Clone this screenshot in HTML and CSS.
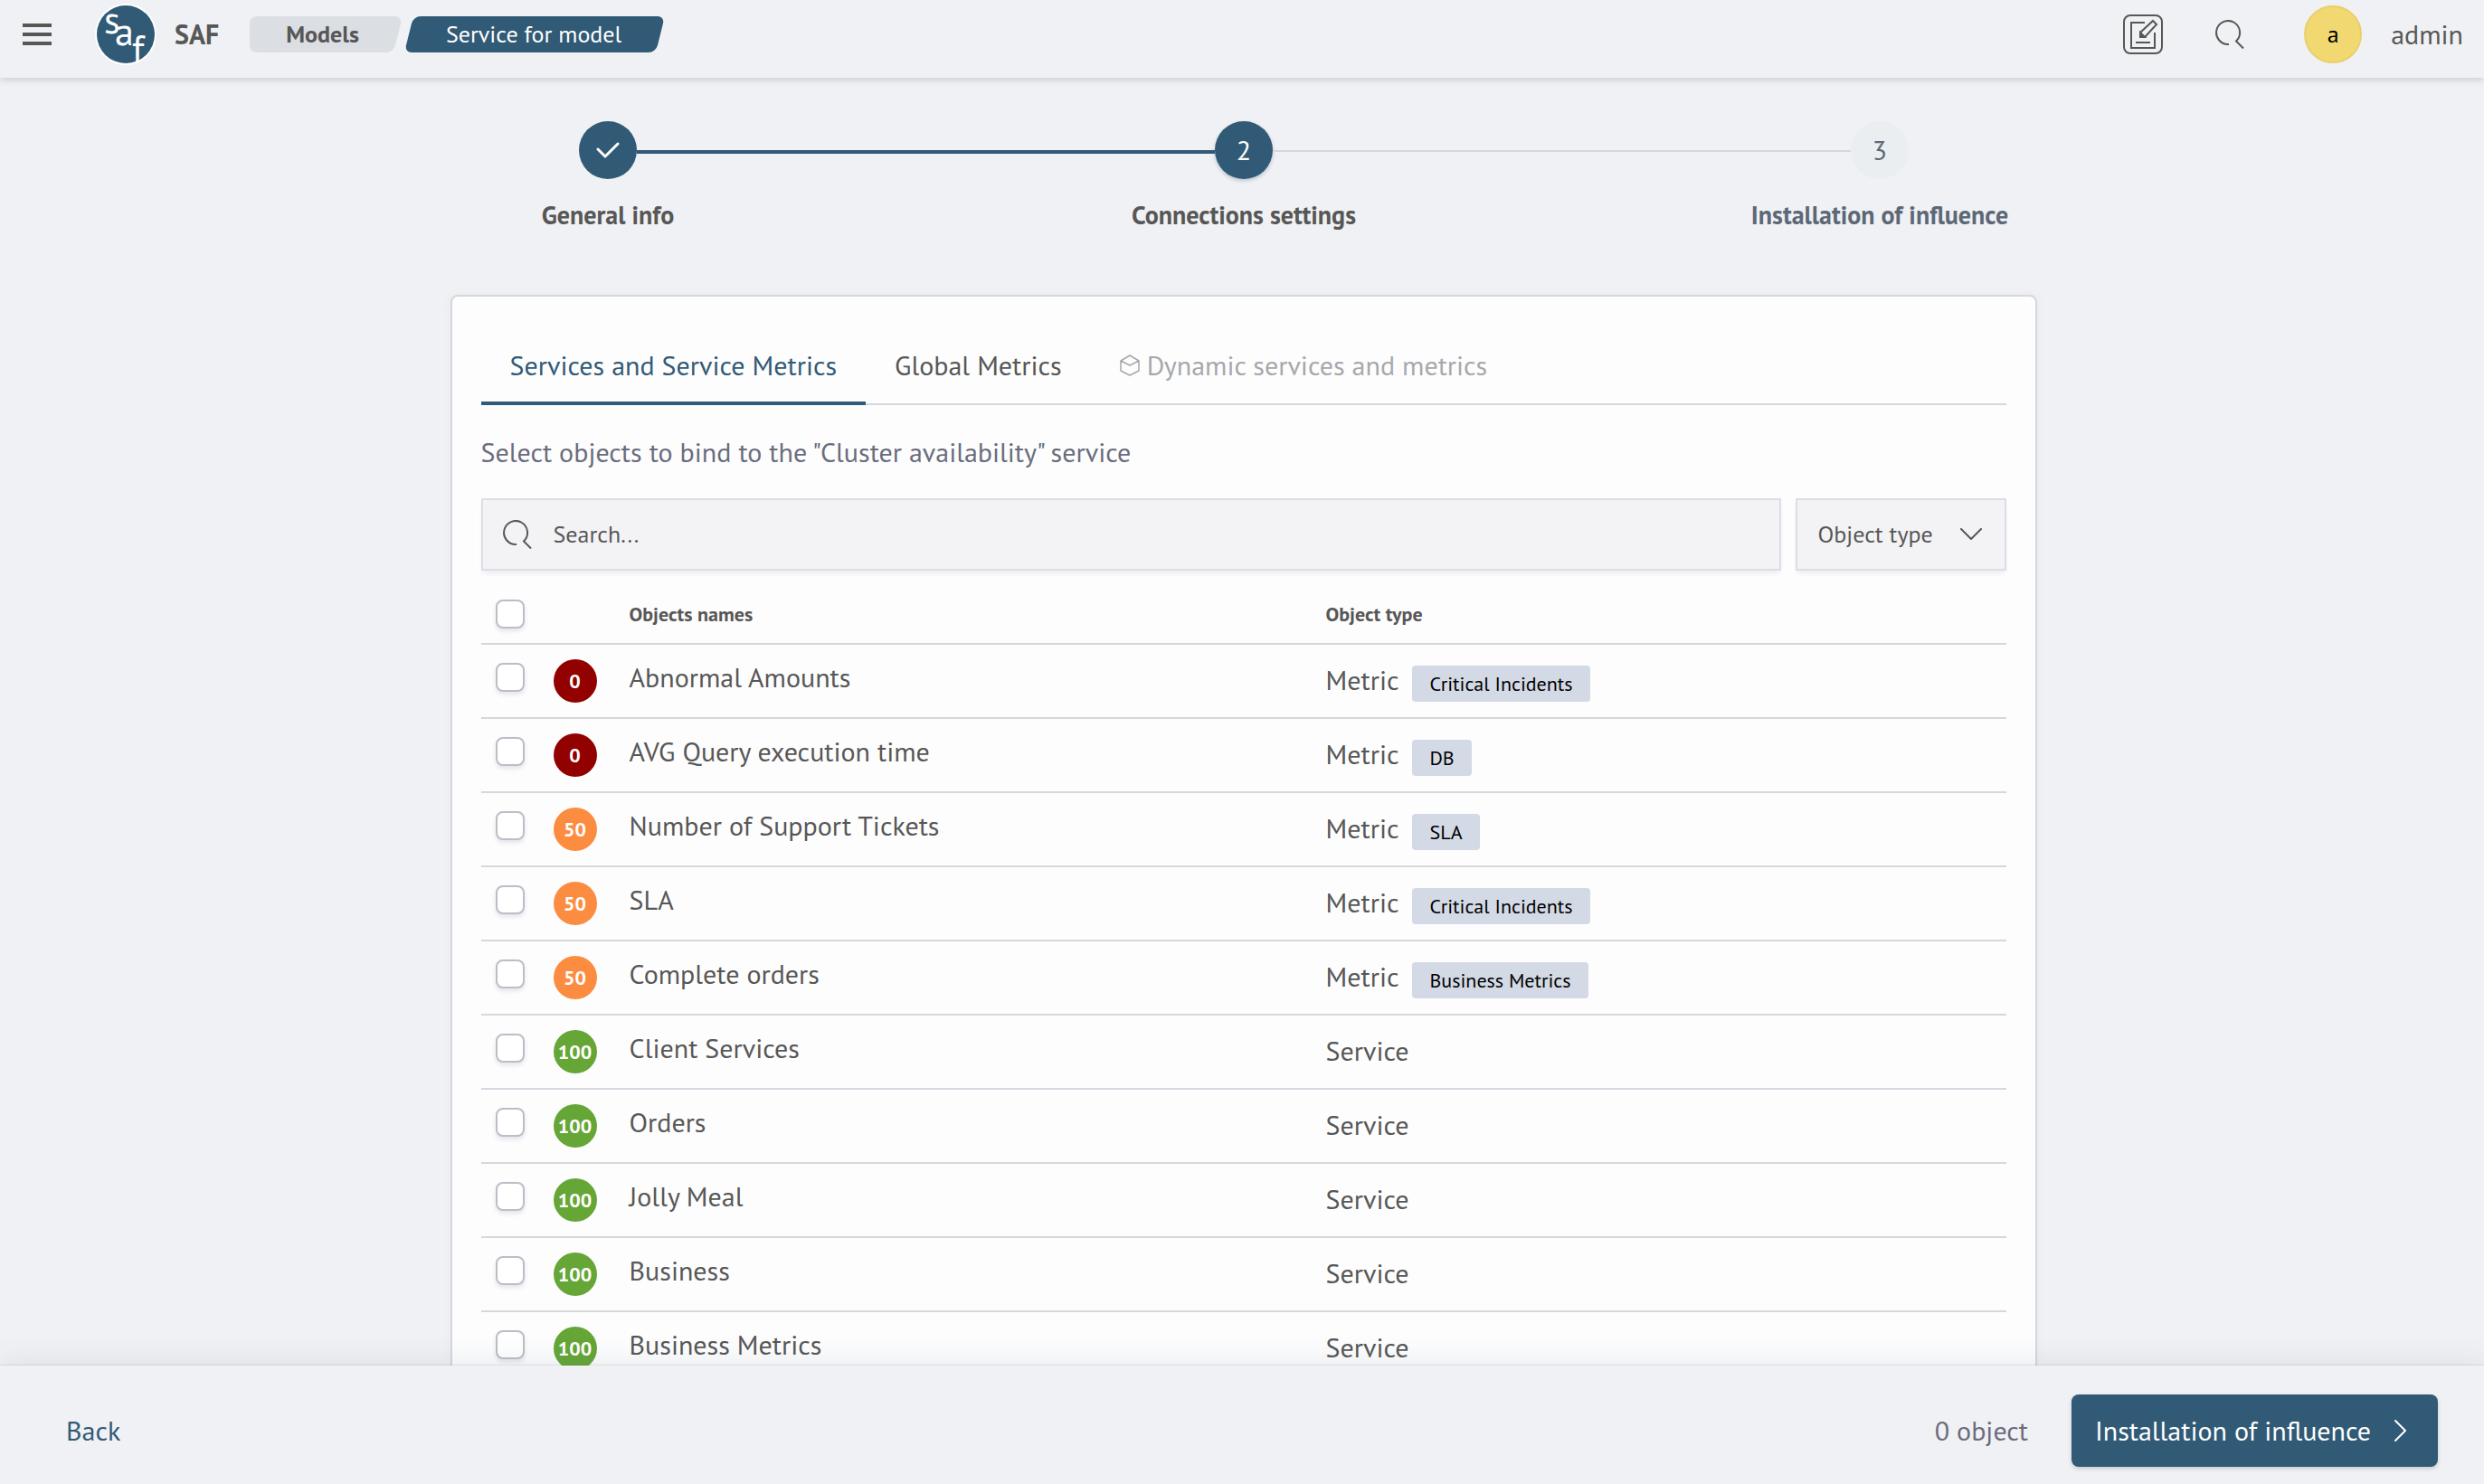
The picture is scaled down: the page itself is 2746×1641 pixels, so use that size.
FILE: index.html
```html
<!DOCTYPE html>
<html lang="en">
<head>
<meta charset="utf-8">
<meta name="viewport" content="width=device-width, initial-scale=1">
<title>SAF – Service for model</title>
<link rel="stylesheet" href="styles.css">
</head>
<body>
<header class="topbar">
  <button class="icon-button menu" type="button" aria-label="Menu">
    <svg width="32" height="24" viewBox="0 0 32 24" fill="currentColor"><path d="M0 0h32v4H0zM0 10h32v4H0zM0 20h32v4H0z"/></svg>
  </button>
  <a class="brand" href="#">
    <svg class="logo" width="68" height="68" viewBox="0 0 68 68" aria-hidden="true">
      <circle cx="34" cy="34" r="34" fill="#fff"/><circle cx="34" cy="34" r="32" fill="#315a76"/>
      <g class="logo-letters" fill="#fff"><text x="10" y="33" font-size="42">s</text><text x="22" y="46" font-size="42">a</text><text x="41" y="65" font-size="42">f</text></g>
    </svg>
    <span class="brand-name">SAF</span>
  </a>
  <nav class="crumbs" aria-label="Breadcrumb">
    <a class="crumb crumb-first" href="#">Models</a>
    <a class="crumb crumb-current" href="#" aria-current="page">Service for model</a>
  </nav>
  <div class="account">
    <button class="icon-button" type="button" aria-label="Edit">
      <svg width="44" height="44" viewBox="0 0 44 44" fill="none" stroke="currentColor" stroke-width="2"><rect x="1" y="1" width="42" height="42" rx="7"/><path d="M24 9H9v28h26V20M14 31h16"/><path d="M19 25v-5L33 7l4 4-13 14z"/><path d="M19 20l5 5h-5z" fill="currentColor"/></svg>
    </button>
    <button class="icon-button" type="button" aria-label="Search">
      <svg width="32" height="32" viewBox="0 0 32 32" fill="none" stroke="currentColor" stroke-width="2"><path d="M15 27A13 13 0 1 1 23 23.500L31 31.500"/></svg>
    </button>
    <a class="user" href="#"><span class="avatar">a</span><span>admin</span></a>
  </div>
</header>

<main class="content">
  <ol class="stepper">
    <li class="step done"><span class="dot"><svg width="26" height="18" viewBox="0 0 26 18" fill="none" stroke="currentColor" stroke-width="3" stroke-linecap="round" stroke-linejoin="round"><path d="M2 8l8 8L24 2"/></svg></span><span class="step-label">General info</span></li>
    <li class="step current" aria-current="step"><span class="dot">2</span><span class="step-label">Connections settings</span></li>
    <li class="step"><span class="dot">3</span><span class="step-label">Installation of influence</span></li>
  </ol>

  <section class="card">
    <div class="tabs" role="tablist">
      <button class="tab active" type="button" role="tab" aria-selected="true">Services and Service Metrics</button>
      <button class="tab" type="button" role="tab">Global Metrics</button>
      <button class="tab" type="button" role="tab" disabled>
        <svg width="22" height="24" viewBox="0 0 22 24" fill="none" stroke="currentColor" stroke-width="1.500" stroke-linejoin="round"><path d="M11 1l10 6v11l-10 5-10-5V7zM1 7l10 5 10-5"/></svg>
        <span>Dynamic services and metrics</span></button>
    </div>
    <p class="hint">Select objects to bind to the "Cluster availability" service</p>
    <div class="filters">
      <label class="search">
        <svg width="32" height="32" viewBox="0 0 32 32" fill="none" stroke="currentColor" stroke-width="2"><path d="M15 27A13 13 0 1 1 23 23.500L31 31.500"/></svg>
        <input type="text" placeholder="Search..." aria-label="Search">
      </label>
      <div class="select">
        <select aria-label="Object type"><option>Object type</option></select>
        <svg width="26" height="14" viewBox="0 0 26 14" fill="none" stroke="currentColor" stroke-width="2" stroke-linecap="round" stroke-linejoin="round"><path d="M2 1l11 11L24 1"/></svg>
      </div>
    </div>
    <table class="objects">
      <thead><tr><th class="col-check"><input type="checkbox" aria-label="Select all"></th><th class="col-score"></th><th class="col-name">Objects names</th><th>Object type</th></tr></thead>
      <tbody>
        <tr><td><input type="checkbox" aria-label="Abnormal Amounts"></td><td><span class="score bad">0</span></td><td class="name">Abnormal Amounts</td><td><div class="type">Metric<span class="tag">Critical Incidents</span></div></td></tr>
        <tr><td><input type="checkbox" aria-label="AVG Query execution time"></td><td><span class="score bad">0</span></td><td class="name">AVG Query execution time</td><td><div class="type">Metric<span class="tag">DB</span></div></td></tr>
        <tr><td><input type="checkbox" aria-label="Number of Support Tickets"></td><td><span class="score mid">50</span></td><td class="name">Number of Support Tickets</td><td><div class="type">Metric<span class="tag">SLA</span></div></td></tr>
        <tr><td><input type="checkbox" aria-label="SLA"></td><td><span class="score mid">50</span></td><td class="name">SLA</td><td><div class="type">Metric<span class="tag">Critical Incidents</span></div></td></tr>
        <tr><td><input type="checkbox" aria-label="Complete orders"></td><td><span class="score mid">50</span></td><td class="name">Complete orders</td><td><div class="type">Metric<span class="tag">Business Metrics</span></div></td></tr>
        <tr><td><input type="checkbox" aria-label="Client Services"></td><td><span class="score good">100</span></td><td class="name">Client Services</td><td><div class="type">Service</div></td></tr>
        <tr><td><input type="checkbox" aria-label="Orders"></td><td><span class="score good">100</span></td><td class="name">Orders</td><td><div class="type">Service</div></td></tr>
        <tr><td><input type="checkbox" aria-label="Jolly Meal"></td><td><span class="score good">100</span></td><td class="name">Jolly Meal</td><td><div class="type">Service</div></td></tr>
        <tr><td><input type="checkbox" aria-label="Business"></td><td><span class="score good">100</span></td><td class="name">Business</td><td><div class="type">Service</div></td></tr>
        <tr><td><input type="checkbox" aria-label="Business Metrics"></td><td><span class="score good">100</span></td><td class="name">Business Metrics</td><td><div class="type">Service</div></td></tr>
      </tbody>
    </table>
  </section>
</main>

<footer class="actions">
  <a class="back" href="#">Back</a>
  <span class="count">0 object</span>
  <button class="next" type="button"><span>Installation of influence</span>
    <svg width="14" height="26" viewBox="0 0 14 26" fill="none" stroke="currentColor" stroke-width="2" stroke-linecap="round" stroke-linejoin="round"><path d="M1 2l11 11L1 24"/></svg>
  </button>
</footer>
</body>
</html>
```
FILE: styles.css
```css
:root {
  --blue: #315a76;
  --text: #575756;
  --muted: #6a6c7c;
  --page: #f0f1f4;
  --line: #d6d7de;
}
* { box-sizing: border-box; }
body {
  margin: 0;
  height: 100vh;
  display: flex;
  flex-direction: column;
  background: var(--page);
  color: var(--text);
  font: 30px/40px "PT Sans", "Noto Sans", sans-serif;
}
a { color: inherit; text-decoration: none; }
button, input, select { font: inherit; color: inherit; }
button { padding: 0; border: 0; background: none; }
svg { display: block; flex: none; }

.topbar {
  flex: none;
  display: flex;
  align-items: center;
  height: 86px;
  padding: 0 23px 10px 25px;
  background: var(--page);
  box-shadow: 0 2px 8px #c3cbd1;
  z-index: 1;
}
.brand { display: flex; align-items: center; gap: 20px; margin-left: 48px; }
.logo { overflow: visible; }
.logo-letters { font-family: "PT Sans", "Noto Sans", sans-serif; }
.brand-name { font-weight: 700; }
.crumbs { display: flex; gap: 2px; margin-left: 34px; font-size: 26px; }
.crumb { position: relative; z-index: 0; padding: 0 48px 0 46px; }
.crumb::before, .crumb::after { content: ""; position: absolute; z-index: -1; inset: 0 5px; border-radius: 8px; }
.crumb-first { padding-left: 40px; font-weight: 700; }
.crumb-first::before { inset: 0 24px 0 0; background: #dbdee3; }
.crumb-first::after { left: 24px; background: #dbdee3; transform: skewX(-14deg); }
.crumb-current { color: #fff; }
.crumb-current::before { background: var(--blue); transform: skewX(-14deg); }
.account { display: flex; align-items: center; gap: 58px; margin-left: auto; }
.user { display: flex; align-items: center; gap: 32px; margin-left: 8px; }
.avatar {
  width: 64px;
  height: 64px;
  border: 2px solid #e9d06b;
  border-radius: 50%;
  background: #f1d870;
  color: #000;
  font-size: 26px;
  line-height: 60px;
  text-align: center;
}

.content { flex: 1; min-height: 0; overflow: hidden; padding: 48px 0 0 4px; }
.stepper {
  display: grid;
  grid-template-columns: repeat(3, 1fr);
  width: 2109px;
  max-width: 100%;
  margin: 0 auto;
  padding: 0;
  list-style: none;
}
.step { position: relative; display: flex; flex-direction: column; align-items: center; gap: 20px; color: #5d6877; }
.step + .step::before {
  content: "";
  position: absolute;
  top: 32px;
  right: calc(50% + 32px);
  width: calc(100% - 64px);
  height: 2px;
  background: var(--line);
}
.done + .step::before { height: 4px; background: var(--blue); }
.dot { display: flex; align-items: center; justify-content: center; width: 64px; height: 64px; border-radius: 50%; background: #ebeef1; }
.done .dot, .current .dot { background: var(--blue); color: #fff; }
.current .dot { box-shadow: 0 2px 4px #b9c3cb; }
.step-label { font-size: 28px; font-weight: 700; }
.done, .current { color: var(--text); }

.card {
  width: 64%;
  min-width: 1000px;
  margin: 68px auto 0;
  padding: 32px;
  border: 2px solid var(--line);
  border-radius: 8px;
  background: #fdfdfe;
  box-shadow: 0 0 8px #e8e9ee;
}
.tabs { display: flex; box-shadow: inset 0 -2px var(--line); }
.tab { display: flex; align-items: center; gap: 8px; height: 88px; padding: 4px 32px 0; border-bottom: 4px solid transparent; }
.tab.active { border-color: var(--blue); color: var(--blue); }
.tab:disabled { color: #a6a8ab; }
.hint { margin: 32px 0 31px; color: var(--muted); }
.filters { display: flex; gap: 16px; font-size: 26px; }
.search, .select {
  display: flex;
  align-items: center;
  height: 80px;
  border: 2px solid #dcdee5;
  background: #f3f3f6;
  box-shadow: 0 4px 6px -2px #e6e7ee;
}
.search { flex: 1; gap: 24px; padding: 0 22px; }
.search input { flex: 1; min-width: 0; padding: 0; border: 0; background: none; outline: none; }
.search input::placeholder { color: var(--text); opacity: 1; }
.select { position: relative; width: 233px; }
.select select { width: 100%; height: 100%; padding: 0 60px 0 22px; border: 0; background: none; appearance: none; outline: none; }
.select svg { position: absolute; right: 24px; pointer-events: none; }

.objects { width: 100%; margin-top: 16px; border-collapse: separate; border-spacing: 0; table-layout: fixed; }
.objects th, .objects td { padding: 0; border-bottom: 2px solid var(--line); text-align: left; vertical-align: top; }
.objects th { height: 66px; padding-top: 16px; font-size: 22px; line-height: 32px; }
.objects td { height: 82px; padding-top: 16px; }
.col-check { width: 80px; }
.col-score { width: 84px; }
.col-name { width: 770px; }
.objects input {
  display: block;
  width: 32px;
  height: 32px;
  margin: 0 0 0 16px;
  border: 2px solid #bcbec6;
  border-radius: 8px;
  background: #fff;
  box-shadow: 0 3px 5px #e4e5ea;
  appearance: none;
}
.objects td:first-child { padding-top: 20px; }
.objects td:last-child { padding-top: 19px; }
.score { display: block; width: 48px; height: 48px; border-radius: 50%; color: #fff; font-size: 22px; font-weight: 700; line-height: 48px; text-align: center; }
.bad { background: #920000; }
.mid { background: #fb8c40; }
.good { background: #66a636; }
.type { display: flex; gap: 15px; }
.tag { margin-top: 4px; padding: 0 19px; border-radius: 4px; background: #d3d9e5; color: #000; font-size: 22px; }

.actions {
  flex: none;
  display: flex;
  align-items: center;
  height: 131px;
  padding: 12px 51px 0 73px;
  background: var(--page);
  box-shadow: 0 0 2px rgba(60, 90, 95, .3), 0 0 32px rgba(60, 90, 110, .14);
  z-index: 1;
}
.back { color: var(--blue); }
.count { margin-left: auto; color: var(--muted); }
.next {
  display: flex;
  align-items: center;
  justify-content: space-between;
  width: 405px;
  height: 80px;
  margin-left: 48px;
  padding: 0 34px 0 26px;
  border-radius: 8px;
  background: var(--blue);
  color: #fff;
  box-shadow: 0 2px 4px #c3c9ce;
}
```
